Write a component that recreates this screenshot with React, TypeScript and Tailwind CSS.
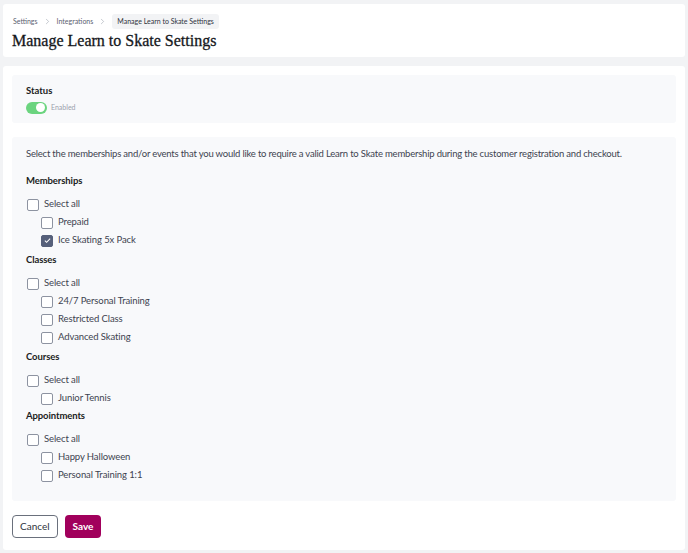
import React, { useState } from "react";
import { ChevronRight } from "lucide-react";

type Group = { title: string; items: string[] };

const groups: Group[] = [
  { title: "Memberships", items: ["Prepaid", "Ice Skating 5x Pack"] },
  { title: "Classes", items: ["24/7 Personal Training", "Restricted Class", "Advanced Skating"] },
  { title: "Courses", items: ["Junior Tennis"] },
  { title: "Appointments", items: ["Happy Halloween", "Personal Training 1:1"] },
];

function Box({ checked }: { checked?: boolean }) {
  return (
    <span
      className={`flex h-[12px] w-[12px] shrink-0 items-center justify-center rounded-[2px] border ${
        checked ? "border-[#56607a] bg-[#56607a]" : "border-[#8d93a1] bg-white"
      }`}
    >
      {checked && (
        <svg viewBox="0 0 12 12" className="h-[9px] w-[9px]" fill="none" stroke="white" strokeWidth="1.4">
          <path d="M2.5 6.2 L4.8 8.4 L9.5 3.6" />
        </svg>
      )}
    </span>
  );
}

function Row({ label, checked, child }: { label: string; checked?: boolean; child?: boolean }) {
  return (
    <label className={`flex h-[18px] items-center gap-[5px] ${child ? "pl-[14px]" : ""}`}>
      <Box checked={checked} />
      <span className="text-[9.5px] tracking-[-0.1px] text-[#3d4350]">{label}</span>
    </label>
  );
}

export default function App() {
  const [enabled] = useState(true);
  return (
    <div
      className="min-h-[553px] bg-[#f2f3f5] px-[3px] pt-[4px] pb-[4px]"
      style={{ fontFamily: 'Lato, "Noto Sans", sans-serif' }}
    >
      <div className="rounded-[3px] bg-white px-[9px] pt-[10px] pb-[6px]">
        <nav className="flex items-center text-[7px] text-[#5b6170]">
          <span className="pl-[1px]">Settings</span>
          <ChevronRight className="mx-[5px] h-[9px] w-[9px] text-[#9aa0ac]" strokeWidth={1.5} />
          <span>Integrations</span>
          <ChevronRight className="mx-[5px] h-[9px] w-[9px] text-[#9aa0ac]" strokeWidth={1.5} />
          <span className="rounded-[3px] bg-[#f2f3f5] px-[5px] py-[2px] text-[#2f3440]">Manage Learn to Skate Settings</span>
        </nav>
        <h1
          className="mt-[2px] text-[16px] leading-[20px] text-[#15171b]"
          style={{ fontFamily: '"Liberation Serif", serif', WebkitTextStroke: "0.3px #15171b" }}
        >
          Manage Learn to Skate Settings
        </h1>
      </div>

      <div className="mt-[9px] rounded-[3px] bg-white px-[9px] pt-[9px] pb-[12px]">
        <div className="rounded-[3px] bg-[#f8f9fb] px-[14px] pt-[10px] pb-[9px]">
          <div className="text-[9.5px] font-bold leading-[12px] text-[#1b1d22]">Status</div>
          <div className="mt-[5px] flex items-center gap-[4px]">
            <span className={`flex h-[12px] w-[21px] items-center rounded-full px-[2px] ${enabled ? "justify-end bg-[#6bd47f]" : "bg-gray-300"}`}>
              <span className="h-[9px] w-[9px] rounded-full bg-white" />
            </span>
            <span className="text-[7px] text-[#9aa0ac]">Enabled</span>
          </div>
        </div>

        <div className="mt-[14px] rounded-[3px] bg-[#f8f9fb] px-[14px] pt-[9px] pb-[16px]">
          <p className="whitespace-nowrap text-[9.5px] leading-[16px] tracking-[-0.2px] text-[#3d4350]">
            Select the memberships and/or events that you would like to require a valid Learn to Skate membership during the customer registration and checkout.
          </p>
          {groups.map((g, gi) => (
            <div key={g.title} className={gi === 0 ? "mt-[11px]" : gi === 3 ? "mt-0" : "mt-[2px]"}>
              <div className="text-[9.5px] font-bold leading-[16px] tracking-[-0.1px] text-[#1b1d22]">{g.title}</div>
              <div className="mt-[7px] flex flex-col pl-[1px]">
                <Row label="Select all" />
                {g.items.map((it) => (
                  <Row key={it} label={it} child checked={it === "Ice Skating 5x Pack"} />
                ))}
              </div>
            </div>
          ))}
        </div>

        <div className="mt-[14px] flex gap-[7px]">
          <button className="h-[23px] rounded-[4px] border border-[#6a707c] bg-white px-[7px] text-[10px] text-[#2f3440]">
            Cancel
          </button>
          <button className="h-[23px] rounded-[4px] bg-[#a1005c] px-[8px] text-[10px] font-bold text-white">
            Save
          </button>
        </div>
      </div>
    </div>
  );
}
